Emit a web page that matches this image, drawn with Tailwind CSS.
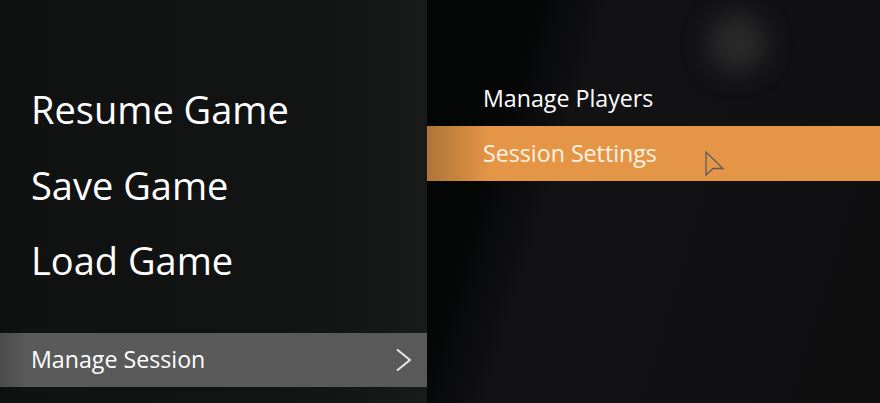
<!DOCTYPE html>
<html lang="en">

<head>
    <meta charset="UTF-8">
    <meta name="viewport" content="width=device-width, initial-scale=1.0">
    <script src="https://cdn.jsdelivr.net/npm/@tailwindcss/browser@4"></script>
    <title>Session Menu</title>
</head>

<body class="w-[880px] h-[403px] overflow-hidden bg-[#0c0c0e] text-white font-['Open_Sans',sans-serif]">
    <div class="relative flex w-full h-full">
        <!-- Left menu -->
        <nav class="relative z-10 w-[427px] h-full flex flex-col shrink-0 bg-gradient-to-r from-[#101111] via-[#121313] via-70% to-[#191a1a] pt-[71px]">
            <a class="h-[76px] pl-[31px] flex items-center text-[38px]">Resume Game</a>
            <a class="h-[76px] pl-[31px] flex items-center text-[38px]">Save Game</a>
            <a class="h-[75px] pl-[31px] flex items-center text-[38px]">Load Game</a>
            <a class="mt-[35px] h-[54px] pl-[31px] pr-[14px] flex items-center justify-between text-[23.200px] bg-gradient-to-r from-[#4c4c4c] from-0% to-[#5a5a5a] to-[6%]">
                <span class="-mt-0.5">Manage Session</span>
                <svg width="18" height="24" viewBox="0 0 18 24" fill="none" stroke="#e8e8e8" stroke-width="2">
                    <path d="M2 1.500 L15 12 L2 22.500" />
                </svg>
            </a>
        </nav>

        <!-- Right menu -->
        <section class="relative flex-1 h-full pt-[72px] bg-[linear-gradient(107deg,#040505_18%,#121215_32%,#111113_70%,#0e0e0f_100%)]">
            <div class="absolute left-[280px] top-[13px] w-[60px] h-[60px] rounded-full bg-[#333333]/70 blur-[12px]"></div>
            <a class="relative h-[54px] pl-14 flex items-center text-[23.200px]"><span class="-mt-0.5">Manage Players</span></a>
            <a class="relative h-[55px] pl-14 flex items-center text-[23.200px] text-[#fff3e4] bg-gradient-to-r from-[#ae7537] to-[#e59546] to-[14%]"><span>Session Settings</span></a>
            <!-- Cursor -->
            <svg class="absolute left-[277px] top-[150px]" width="22" height="28" viewBox="0 0 22 28" fill="none" stroke="#5b5b60" stroke-width="1.300">
                <path d="M2 2 V25 L9 18.500 L19 18.500 Z" />
            </svg>
        </section>
    </div>
</body>

</html>
